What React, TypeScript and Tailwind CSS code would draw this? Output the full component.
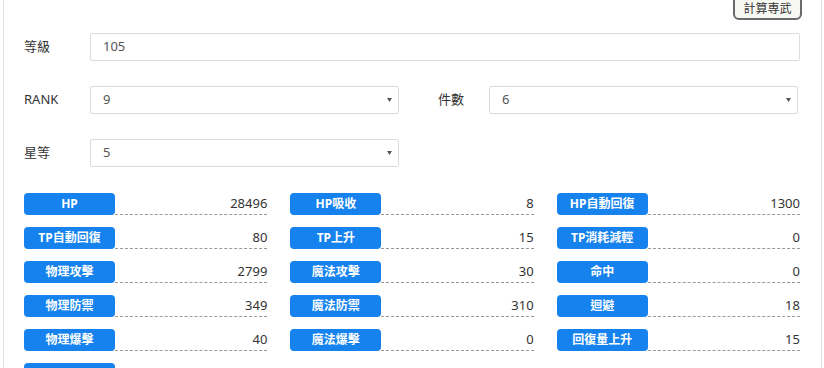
import React from "react"

const stats = [
  ["HP", "28496"],
  ["HP吸收", "8"],
  ["HP自動回復", "1300"],
  ["TP自動回復", "80"],
  ["TP上升", "15"],
  ["TP消耗減輕", "0"],
  ["物理攻擊", "2799"],
  ["魔法攻擊", "30"],
  ["命中", "0"],
  ["物理防禦", "349"],
  ["魔法防禦", "310"],
  ["迴避", "18"],
  ["物理爆擊", "40"],
  ["魔法爆擊", "0"],
  ["回復量上升", "15"],
  ["", ""],
]

function SelectBox({ value, className }: { value: string; className: string }) {
  return (
    <div
      className={`flex h-[28px] items-center justify-between rounded-[2px] border border-[#dcdcdc] bg-white pl-[12px] pr-[5px] text-[13px] text-[#555] ${className}`}
    >
      <span>{value}</span>
      <svg width="5" height="4" viewBox="0 0 5 4" className="mr-[1px]">
        <path d="M0 0 L5 0 L2.5 4 Z" fill="#555" />
      </svg>
    </div>
  )
}

export default function App() {
  return (
    <div
      className="h-[368px] w-[824px] overflow-hidden bg-white"
      style={{ fontFamily: '"Noto Sans", "Noto Sans CJK TC", sans-serif' }}
    >
      <div className="ml-[3px] h-full w-[819px] border-x border-[#e2e2e2] pl-[20px] pr-[21px]">
        {/* top action */}
        <div className="flex justify-end">
          <button className="-mr-[2px] -mt-[7px] h-[27px] w-[69px] rounded-[6px] border-2 border-[#6a6a6a] bg-[#f8f8f3] pt-[4px] text-[12px] text-[#333]">
            計算専武
          </button>
        </div>

        {/* level */}
        <div className="mt-[13px] flex items-center">
          <div className="w-[66px] text-[13px] text-[#333]">等級</div>
          <div className="flex h-[28px] flex-1 items-center rounded-[2px] border border-[#dcdcdc] pl-[12px] text-[13px] text-[#555]">
            105
          </div>
        </div>

        {/* rank / count */}
        <div className="mt-[25px] flex items-center">
          <div className="w-[66px] text-[13px] text-[#333]">RANK</div>
          <SelectBox value="9" className="w-[309px]" />
          <div className="ml-[39px] w-[51px] text-[13px] text-[#333]">件數</div>
          <SelectBox value="6" className="w-[309px]" />
        </div>

        {/* stars */}
        <div className="mt-[25px] flex items-center">
          <div className="w-[66px] text-[13px] text-[#333]">星等</div>
          <SelectBox value="5" className="w-[309px]" />
        </div>

        {/* stats */}
        <div className="mt-[26px] grid grid-cols-3 gap-x-[23px] gap-y-[12px]">
          {stats.map(([label, value], i) => (
            <div key={i} className="flex h-[22px]">
              <div className="flex w-[91px] shrink-0 items-center justify-center rounded-[4px] bg-[#1682ee] text-[12px] font-bold text-white">
                {label}
              </div>
              <div className="flex flex-1 items-center justify-end border-b border-dashed border-[#9a9a9a] text-[13px] leading-none text-[#333]">
                {value}
              </div>
            </div>
          ))}
        </div>
      </div>
    </div>
  )
}
